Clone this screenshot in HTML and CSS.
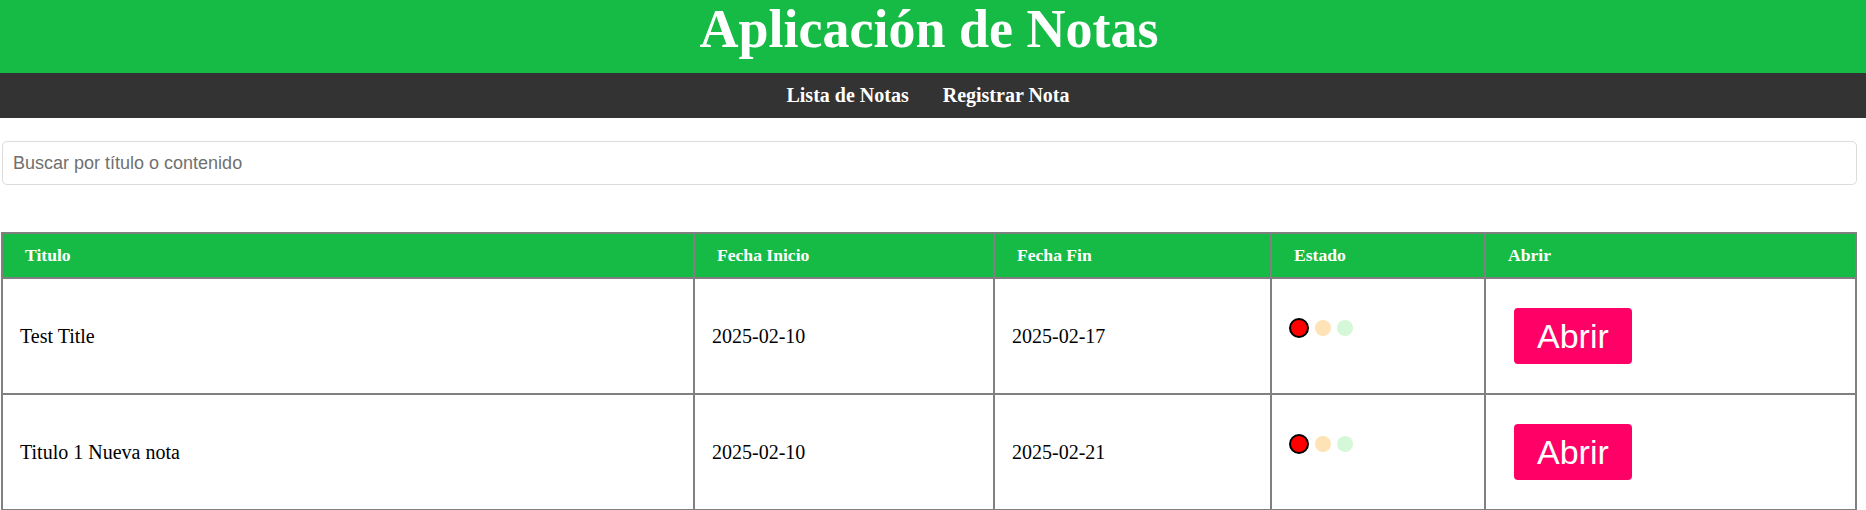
FILE: index.html
```html
<!DOCTYPE html>
<html lang="es">
<head>
<meta charset="utf-8">
<title>Aplicación de Notas</title>
<link rel="stylesheet" href="styles.css">
</head>
<body>
<header class="app-header">
  <h1 class="app-title">Aplicación de Notas</h1>
</header>
<nav class="app-nav">
  <a class="nav-link" href="#">Lista de Notas</a>
  <a class="nav-link" href="#">Registrar Nota</a>
</nav>
<main class="content">
  <input class="search" type="text" placeholder="Buscar por título o contenido">
  <table class="notes">
    <colgroup>
      <col class="col-title">
      <col class="col-start">
      <col class="col-end">
      <col class="col-state">
      <col class="col-open">
    </colgroup>
    <thead>
      <tr>
        <th>Titulo</th>
        <th>Fecha Inicio</th>
        <th>Fecha Fin</th>
        <th>Estado</th>
        <th>Abrir</th>
      </tr>
    </thead>
    <tbody>
      <tr>
        <td>Test Title</td>
        <td>2025-02-10</td>
        <td>2025-02-17</td>
        <td><div class="lights"><span class="light red on"></span><span class="light amber"></span><span class="light green"></span></div></td>
        <td><button class="open-btn">Abrir</button></td>
      </tr>
      <tr>
        <td>Titulo 1 Nueva nota</td>
        <td>2025-02-10</td>
        <td>2025-02-21</td>
        <td><div class="lights"><span class="light red on"></span><span class="light amber"></span><span class="light green"></span></div></td>
        <td><button class="open-btn">Abrir</button></td>
      </tr>
    </tbody>
  </table>
</main>
</body>
</html>
```

FILE: styles.css
```css
body {
  margin: 0;
  font-family: "Liberation Serif", "Times New Roman", serif;
  background: #fff;
  color: #000;
}

.app-header {
  background: #16bb45;
  color: #fff;
  height: 73px;
  box-sizing: border-box;
  padding: 0 8px 0 0;
  text-align: center;
}

.app-title {
  margin: 0;
  font-size: 54px;
  line-height: 59px;
  font-weight: bold;
}

.app-nav {
  background: #333333;
  height: 45px;
  display: flex;
  justify-content: center;
  align-items: center;
  gap: 34px;
  padding-right: 10px;
}

.nav-link {
  color: #fff;
  text-decoration: none;
  font-weight: bold;
  font-size: 20px;
}

.content {
  padding: 23px 9px 0 1px;
}

.search {
  display: block;
  width: calc(100% - 1px);
  margin-left: 1px;
  box-sizing: border-box;
  height: 44px;
  padding: 0 10px;
  font: 18px "Liberation Sans", Arial, sans-serif;
  color: #333;
  border: 1px solid #dcdcdc;
  border-radius: 5px;
  outline: none;
}

.search::placeholder {
  color: #707070;
}

.notes {
  margin-top: 47px;
  width: 100%;
  border-collapse: collapse;
  table-layout: fixed;
}

.col-title { width: 692px; }
.col-start { width: 300px; }
.col-end { width: 277px; }
.col-state { width: 214px; }
.col-open { width: 371px; }

.notes th,
.notes td {
  border: 2px solid #808080;
  text-align: left;
}

.notes th {
  background: #16bb45;
  color: #fff;
  font-weight: bold;
  font-size: 17.6px;
  padding: 11px 22px;
}

.notes td {
  font-size: 20px;
  padding: 18px 17px;
  vertical-align: middle;
}

.lights {
  display: flex;
  align-items: center;
  gap: 6px;
  margin-bottom: 16px;
}

.light {
  display: block;
  width: 16px;
  height: 16px;
  border-radius: 50%;
}

.light.red { background: #ffc9c9; }
.light.red.on {
  background: #ff0000;
  border: 2px solid #000;
}
.light.amber { background: #fde3b6; }
.light.green { background: #d5f8d8; }

.open-btn {
  display: block;
  margin: 11px;
  height: 56px;
  padding: 0 23px;
  background: #ff0066;
  color: #fff;
  border: none;
  border-radius: 4px;
  font: 34px "Liberation Sans", Arial, sans-serif;
  cursor: pointer;
}
```
